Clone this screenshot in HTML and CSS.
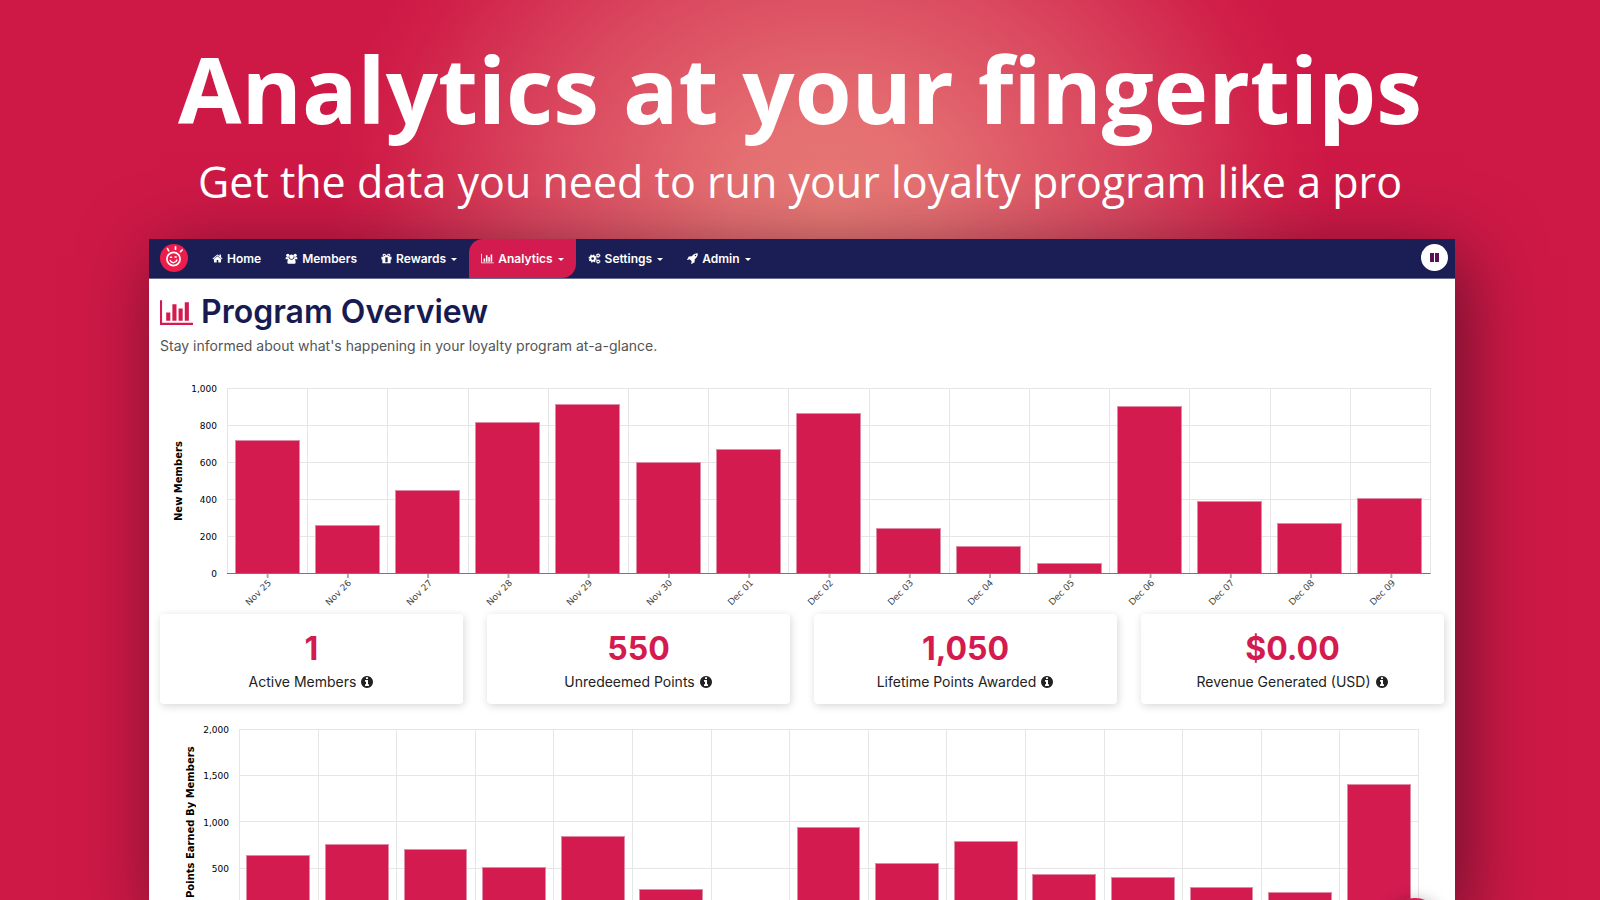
FILE: index.html
```html
<!DOCTYPE html>
<html lang="en">
<head>
  <meta charset="UTF-8">
  <title>Program Overview</title>
  <link rel="stylesheet" href="styles.css">
</head>
<body>
  <!-- Shared icons -->
  <svg class="sprite" aria-hidden="true">
    <symbol id="i-home" viewBox="0 0 1792 1792">
      <path d="M1472 992v480q0 26-19 45t-45 19h-384v-384h-256v384h-384q-26 0-45-19t-19-45v-480q0-1 .5-3t.5-3l575-474 575 474q1 2 1 6zm223-69l-62 74q-8 9-21 11h-3q-13 0-21-7l-692-577-692 577q-12 8-24 7-13-2-21-11l-62-74q-8-10-7-23.5t11-21.5l719-599q32-26 76-26t76 26l244 204v-195q0-14 9-23t23-9h192q14 0 23 9t9 23v408l219 182q10 8 11 21.5t-7 23.5z"/>
    </symbol>
    <symbol id="i-chart" viewBox="0 0 2048 1792">
      <path d="M640 896v512h-256v-512h256zM1024 384v1024h-256v-1024h256zM2048 1536v128h-2048v-1536h128v1408h1920zM1408 640v768h-256v-768h256zM1792 256v1152h-256v-1152h256z"/>
    </symbol>
    <symbol id="i-info" viewBox="0 0 1792 1792">
      <path d="M1152 1376v-160q0-14-9-23t-23-9h-96v-512q0-14-9-23t-23-9h-320q-14 0-23 9t-9 23v160q0 14 9 23t23 9h96v320h-96q-14 0-23 9t-9 23v160q0 14 9 23t23 9h448q14 0 23-9t9-23zm-128-896v-160q0-14-9-23t-23-9h-192q-14 0-23 9t-9 23v160q0 14 9 23t23 9h192q14 0 23-9t9-23zm640 416q0 209-103 385.5t-279.5 279.5-385.5 103-385.5-103-279.5-279.5-103-385.5 103-385.5 279.5-279.5 385.5-103 385.5 103 279.5 279.5 103 385.5z"/>
    </symbol>
    <symbol id="i-users" viewBox="0 0 26 24">
      <circle cx="5" cy="5" r="3.6"/><circle cx="21" cy="5" r="3.6"/><circle cx="13" cy="8" r="5"/>
      <path d="M0 13c0-3 1-4.500 2.500-4.500 1 .8 3 1.300 4.500.6 0 2 .6 3.500 1.800 4.500H2C.8 13.600 0 13.600 0 13zM26 13c0-3-1-4.500-2.500-4.500-1 .8-3 1.300-4.500.6 0 2-.6 3.500-1.800 4.500H24c1.200 0 2 0 2-.6zM4 20c0-4.500 1.500-7 4.500-7 2.500 2 6.500 2 9 0 3 0 4.500 2.500 4.500 7 0 2-1.300 3.500-3.500 3.500h-11C5.300 23.500 4 22 4 20z"/>
    </symbol>
    <symbol id="i-gift" viewBox="0 0 24 24">
      <path fill-rule="evenodd" d="M1 8h7.500C5 8 3.500 6.500 3.500 4.700 3.500 2.800 5 1.500 7 1.500c2.300 0 3.700 1.700 5 4 1.300-2.300 2.700-4 5-4 2 0 3.500 1.300 3.500 3.200C20.500 6.500 19 8 15.500 8H23v6h-2v8.500H3V14H1zM7 3.700c-.8 0-1.300.5-1.300 1.100 0 .7.700 1.200 1.700 1.200h2.700C9 4.400 8 3.700 7 3.700zm10 0c-1 0-2 .7-3.100 2.300h2.700c1 0 1.700-.5 1.700-1.200 0-.6-.5-1.100-1.300-1.100zM9.500 9.500V20h5V9.500z"/>
    </symbol>
    <symbol id="i-cogs" viewBox="0 0 26 24">
      <circle cx="9" cy="12" r="5" fill="none" stroke="currentColor" stroke-width="4"/>
      <circle cx="9" cy="12" r="7.500" fill="none" stroke="currentColor" stroke-width="3" stroke-dasharray="3 2.890"/>
      <circle cx="21" cy="5.500" r="2.800" fill="none" stroke="currentColor" stroke-width="2.200"/>
      <circle cx="21" cy="5.500" r="4.200" fill="none" stroke="currentColor" stroke-width="1.600" stroke-dasharray="2 1.300"/>
      <circle cx="21" cy="18.500" r="2.800" fill="none" stroke="currentColor" stroke-width="2.200"/>
      <circle cx="21" cy="18.500" r="4.200" fill="none" stroke="currentColor" stroke-width="1.600" stroke-dasharray="2 1.300"/>
    </symbol>
    <symbol id="i-rocket" viewBox="0 0 24 24">
      <path fill-rule="evenodd" d="M23.500.5c.2 5.500-1.500 9-6.500 13.200L16.500 20 10 23.800l-1-1 1.200-4.600-4.400-4.400L1.200 15l-1-1L4 7.500 10.300 7C14.500 2 18 .3 23.500.5zM18.500 4a1.500 1.500 0 1 0 0 3 1.500 1.500 0 0 0 0-3z"/>
    </symbol>
  </svg>

  <header class="hero">
    <h1>Analytics at your fingertips</h1>
    <p>Get the data you need to run your loyalty program like a pro</p>
  </header>

  <div class="window">
    <nav class="navbar">
      <a class="logo" href="#" aria-label="Dashboard">
        <svg viewBox="0 0 28 28">
          <circle cx="14" cy="14" r="14" fill="#ec1d4b"/>
          <g fill="none" stroke="#fff" stroke-linecap="round">
            <circle cx="13.500" cy="15" r="6.600" stroke-width="1.700"/>
            <path stroke-width="1.500" d="M10.200 16.500c1.500 3 5.600 2.800 6.700-.4M10.500 13.300h1M15 13h1.200"/>
            <path stroke-width="1.700" d="M15.500 2.800v2.400M7.500 4.600l1.200 2.200M22.200 6l-1.700 1.600"/>
          </g>
        </svg>
      </a>
      <a class="nav-link" href="#"><svg class="icon"><use href="#i-home"/></svg>Home</a>
      <a class="nav-link" href="#"><svg class="icon wide"><use href="#i-users"/></svg>Members</a>
      <a class="nav-link dropdown" href="#"><svg class="icon"><use href="#i-gift"/></svg>Rewards</a>
      <a class="nav-link dropdown active" href="#"><svg class="icon wide"><use href="#i-chart"/></svg>Analytics</a>
      <a class="nav-link dropdown" href="#"><svg class="icon wide"><use href="#i-cogs"/></svg>Settings</a>
      <a class="nav-link dropdown" href="#"><svg class="icon"><use href="#i-rocket"/></svg>Admin</a>
      <button class="account" type="button" aria-label="Account">
        <svg viewBox="0 0 9 9"><path d="M0 0h4v9H0zM5 0h4v9H5z" fill="#5a1058"/></svg>
      </button>
    </nav>

    <main>
      <h2><svg class="title-icon"><use href="#i-chart"/></svg>Program Overview</h2>
      <p class="intro">Stay informed about what's happening in your loyalty program at-a-glance.</p>

      <section class="chart members">
        <div class="axis-title">New Members</div>
        <div class="y-axis">
          <span>1,000</span><span>800</span><span>600</span><span>400</span><span>200</span><span>0</span>
        </div>
        <div class="plot">
          <div class="col"><div class="bar" style="height: 72%"></div></div>
          <div class="col"><div class="bar" style="height: 26.2%"></div></div>
          <div class="col"><div class="bar" style="height: 45%"></div></div>
          <div class="col"><div class="bar" style="height: 81.4%"></div></div>
          <div class="col"><div class="bar" style="height: 91.4%"></div></div>
          <div class="col"><div class="bar" style="height: 60%"></div></div>
          <div class="col"><div class="bar" style="height: 67.2%"></div></div>
          <div class="col"><div class="bar" style="height: 86.6%"></div></div>
          <div class="col"><div class="bar" style="height: 24.6%"></div></div>
          <div class="col"><div class="bar" style="height: 14.8%"></div></div>
          <div class="col"><div class="bar" style="height: 5.6%"></div></div>
          <div class="col"><div class="bar" style="height: 90.4%"></div></div>
          <div class="col"><div class="bar" style="height: 39%"></div></div>
          <div class="col"><div class="bar" style="height: 27%"></div></div>
          <div class="col"><div class="bar" style="height: 40.8%"></div></div>
        </div>
        <div class="x-axis">
          <span>Nov 25</span><span>Nov 26</span><span>Nov 27</span><span>Nov 28</span><span>Nov 29</span>
          <span>Nov 30</span><span>Dec 01</span><span>Dec 02</span><span>Dec 03</span><span>Dec 04</span>
          <span>Dec 05</span><span>Dec 06</span><span>Dec 07</span><span>Dec 08</span><span>Dec 09</span>
        </div>
      </section>

      <section class="cards">
        <div class="card">
          <div class="value">1</div>
          <div class="label">Active Members <svg class="info"><use href="#i-info"/></svg></div>
        </div>
        <div class="card">
          <div class="value">550</div>
          <div class="label">Unredeemed Points <svg class="info"><use href="#i-info"/></svg></div>
        </div>
        <div class="card">
          <div class="value">1,050</div>
          <div class="label">Lifetime Points Awarded <svg class="info"><use href="#i-info"/></svg></div>
        </div>
        <div class="card">
          <div class="value">$0.00</div>
          <div class="label">Revenue Generated (USD) <svg class="info"><use href="#i-info"/></svg></div>
        </div>
      </section>

      <section class="chart points">
        <div class="axis-title">Points Earned By Members</div>
        <div class="y-axis">
          <span>2,000</span><span>1,500</span><span>1,000</span><span>500</span><span></span>
        </div>
        <div class="plot">
          <div class="col"><div class="bar" style="height: 32%"></div></div>
          <div class="col"><div class="bar" style="height: 37.9%"></div></div>
          <div class="col"><div class="bar" style="height: 35.2%"></div></div>
          <div class="col"><div class="bar" style="height: 25.6%"></div></div>
          <div class="col"><div class="bar" style="height: 42.2%"></div></div>
          <div class="col"><div class="bar" style="height: 13.4%"></div></div>
          <div class="col"></div>
          <div class="col"><div class="bar" style="height: 46.9%"></div></div>
          <div class="col"><div class="bar" style="height: 27.4%"></div></div>
          <div class="col"><div class="bar" style="height: 39.5%"></div></div>
          <div class="col"><div class="bar" style="height: 21.6%"></div></div>
          <div class="col"><div class="bar" style="height: 20%"></div></div>
          <div class="col"><div class="bar" style="height: 14.8%"></div></div>
          <div class="col"><div class="bar" style="height: 11.7%"></div></div>
          <div class="col"><div class="bar" style="height: 70.3%"></div></div>
        </div>
      </section>
    </main>
    <button class="help" type="button" aria-label="Help"></button>
  </div>
</body>
</html>
```
FILE: styles.css
```css
* {
  box-sizing: border-box;
}

body {
  height: 100vh;
  margin: 0;
  overflow: hidden;
  font-family: Inter, "Open Sans", sans-serif;
  background: radial-gradient(ellipse 500px 430px at 830px 210px, #e87a76 0%, #e57072 20%, #da485f 58%, #d02049 90%, #ce1946 100%) #ce1946;
}

h1, h2, p {
  margin: 0;
}

.sprite {
  display: none;
}

svg {
  fill: currentColor;
}

/* Headline */
.hero {
  padding: 39px 0 29px;
  text-align: center;
  color: #fff;
  font-family: "Open Sans", sans-serif;
}

.hero h1 {
  font-size: 92px;
  line-height: 100px;
  font-weight: 700;
}

.hero p {
  margin-top: 15px;
  font-size: 43px;
  line-height: 56px;
}

.window {
  margin: 0 145px 0 149px;
  background: #fff;
  box-shadow: 10px 16px 70px rgba(50, 10, 30, 0.65);
}

/* Navigation */
.navbar {
  display: flex;
  align-items: stretch;
  height: 40px;
  padding: 0 7px 0 11px;
  background: #1a1e55;
  border-bottom: 1px solid #6a6c92;
}

.logo {
  align-self: center;
  height: 28px;
  margin: 0 12px 2px 0;
}

.logo svg {
  width: 28px;
  height: 28px;
}

.nav-link {
  display: flex;
  align-items: center;
  gap: 4px;
  padding: 0 12px 1px;
  color: #fff;
  font-size: 12px;
  font-weight: 600;
  text-decoration: none;
}

.icon {
  width: 11px;
  height: 11px;
}

.icon.wide {
  width: 13px;
}

.dropdown::after {
  content: "";
  margin: 2px 0 0 1px;
  border: 3px solid transparent;
  border-top-color: #fff;
  border-bottom: 0;
}

.active {
  background: #d31b50;
  border-radius: 14px 0;
}

.account {
  display: flex;
  align-items: center;
  justify-content: center;
  align-self: center;
  width: 27px;
  height: 27px;
  margin: 0 0 2px auto;
  padding: 0;
  border: 0;
  border-radius: 50%;
  background: #fff;
}

.account svg {
  width: 9px;
  height: 9px;
}

/* Page content */
main {
  padding: 15px 11px 0;
}

h2 {
  display: flex;
  align-items: center;
  gap: 8px;
  color: #171b52;
  font-size: 32px;
  line-height: 36px;
  font-weight: 600;
}

.title-icon {
  width: 33px;
  height: 29px;
  color: #d31b50;
}

.intro {
  margin-top: 6px;
  color: #555;
  font-size: 14px;
  line-height: 20px;
}

/* Bar charts */
.chart {
  display: grid;
  grid-template-columns: 16px 30px 1fr;
  grid-template-rows: 186px auto;
  font-family: "DejaVu Sans", sans-serif;
  font-size: 9px;
}

.members {
  margin-top: 32px;
  padding: 0 13px 0 11px;
}

.points {
  margin-top: 25px;
  padding: 0 25px 0 23px;
}

.axis-title {
  writing-mode: vertical-rl;
  transform: rotate(180deg);
  text-align: center;
  line-height: 16px;
  font-size: 10px;
  font-weight: 700;
}

.y-axis {
  display: flex;
  flex-direction: column;
  justify-content: space-between;
  margin: -5px 0 -6px;
  line-height: 12px;
  text-align: right;
}

.y-axis span {
  height: 12px;
}

.plot {
  display: grid;
  grid-template-columns: repeat(15, 1fr);
  margin-left: 10px;
  border-right: 1px solid #e6e6e6;
  border-bottom: 1px solid #777;
  background: repeating-linear-gradient(#e6e6e6 0 1px, transparent 1px 37px);
}

.points .plot {
  background: repeating-linear-gradient(#e6e6e6 0 1px, transparent 1px 25%);
}

.col {
  display: flex;
  align-items: flex-end;
  justify-content: center;
  box-shadow: inset 1px 0 #e6e6e6;
}

.bar {
  width: 81%;
  background: #d31b50;
  border: 1px solid #dc8ca4;
  border-bottom: 0;
}

/* The background draws one tick under each bar */
.x-axis {
  grid-column: 3;
  display: grid;
  grid-template-columns: repeat(15, 1fr);
  height: 40px;
  margin-left: 10px;
  padding-top: 3px;
  color: #444;
  line-height: 12px;
  background: linear-gradient(90deg, transparent 50%, #aaa 50% calc(50% + 1px), transparent 0) 0 0 / calc(100% / 15) 4px repeat-x;
}

.x-axis span {
  width: 48%;
  height: 12px;
  text-align: right;
  transform-origin: right top;
  transform: rotate(-45deg);
}

/* Totals */
.cards {
  display: grid;
  grid-template-columns: repeat(4, 1fr);
  gap: 24px;
}

.card {
  padding: 15px 12px 12px;
  border-radius: 4px;
  background: #fff;
  text-align: center;
  box-shadow: 1px 2px 8px rgba(0, 0, 0, 0.16);
}

.value {
  color: #d31b50;
  font-size: 32px;
  line-height: 40px;
  font-weight: 700;
}

.label {
  display: flex;
  align-items: center;
  justify-content: center;
  gap: 4px;
  margin-top: 3px;
  color: #222;
  font-size: 14px;
  line-height: 20px;
}

.info {
  width: 14px;
  height: 14px;
}

.help {
  position: fixed;
  right: 157px;
  bottom: -54px;
  width: 56px;
  height: 56px;
  border: 0;
  border-radius: 50%;
  background: #d31b50;
  box-shadow: 0 2px 16px rgba(0, 0, 0, 0.3);
}
```
